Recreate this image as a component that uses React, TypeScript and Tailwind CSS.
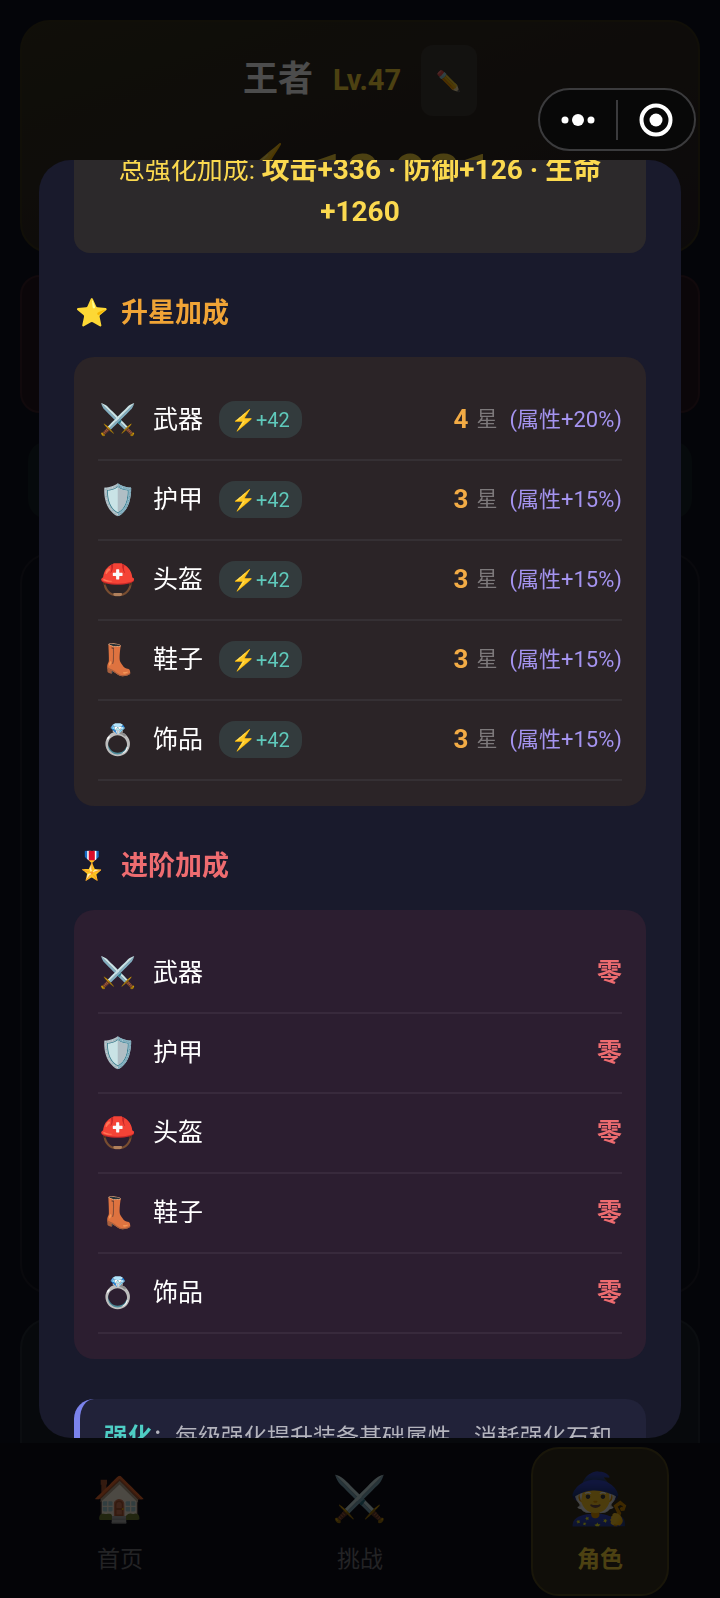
import { useState } from "react";

const gear = [
  { icon: "⚔️", name: "武器", power: 42, stars: 4 },
  { icon: "🛡️", name: "护甲", power: 42, stars: 3 },
  { icon: "⛑️", name: "头盔", power: 42, stars: 3 },
  { icon: "👢", name: "鞋子", power: 42, stars: 3 },
  { icon: "💍", name: "饰品", power: 42, stars: 3 },
];

const tabs = [
  { id: "home", icon: "🏠", label: "首页" },
  { id: "battle", icon: "⚔️", label: "挑战" },
  { id: "role", icon: "🧙", label: "角色" },
];

function SectionTitle({ icon, text, color }: { icon: string; text: string; color: string }) {
  return (
    <h2 className={`flex items-center gap-[11px] h-10 text-[27px] font-bold ${color}`}>
      <span className="w-9 text-center font-normal">{icon}</span>
      {text}
    </h2>
  );
}

function GearName({ icon, name }: { icon: string; name: string }) {
  return (
    <>
      <span className="w-10 text-center text-[30px] leading-none">{icon}</span>
      <span className="ml-[15px] text-[25px] text-white">{name}</span>
    </>
  );
}

function StarBonus() {
  return (
    <section className="mt-10">
      <SectionTitle icon="⭐" text="升星加成" color="text-[#f0a436]" />
      <ul className="mt-6 px-6 pt-6 pb-[25px] rounded-[20px] bg-[#2b2427]">
        {gear.map((g) => (
          <li key={g.name} className="flex items-center h-20 border-b-2 border-[#353034]">
            <GearName icon={g.icon} name={g.name} />
            <span className="ml-4 px-3 h-[37px] flex items-center rounded-2xl bg-[#333b3d] text-[20px] text-[#5fc9bb]">
              ⚡+{g.power}
            </span>
            <span className="ml-auto text-[26px] font-bold text-[#f2ab45]">{g.stars}</span>
            <span className="ml-2 text-[21px] text-[#7d797b]">星</span>
            <span className="ml-3 text-[22px] text-[#a594f0]">(属性+{g.stars * 5}%)</span>
          </li>
        ))}
      </ul>
    </section>
  );
}

function RankBonus() {
  return (
    <section className="mt-10">
      <SectionTitle icon="🎖️" text="进阶加成" color="text-[#ee6c70]" />
      <ul className="mt-6 px-6 pt-6 pb-[25px] rounded-[20px] bg-[#2c1e30]">
        {gear.map((g) => (
          <li key={g.name} className="flex items-center h-20 border-b-2 border-[#382a3c]">
            <GearName icon={g.icon} name={g.name} />
            <span className="ml-auto text-[25px] font-bold text-[#ee6c70]">零</span>
          </li>
        ))}
      </ul>
    </section>
  );
}

function BonusDialog() {
  return (
    <div
      role="dialog"
      aria-label="装备加成"
      className="w-full mx-[39px] h-[80vh] overflow-hidden rounded-[32px] bg-[#191a2c] px-[35px]"
    >
      <div className="-mt-[31px]">
        <p className="py-5 px-6 rounded-2xl bg-[#2c292b] text-center text-[26px] leading-[41px] text-[#fbd94f]">
          总强化加成: <strong className="text-[28px]">攻击+336 · 防御+126 · 生命+1260</strong>
        </p>
        <StarBonus />
        <RankBonus />
        <div className="mt-10 px-6 py-[18px] rounded-[20px] border-l-[6px] border-[#7b83ec] bg-[#212239] text-[23px] leading-[41px] text-[#b4b4bd]">
          <p>
            <strong className="text-[24px] text-[#4ecdc4]">强化</strong>：每级强化提升装备基础属性，消耗强化石和金币
          </p>
        </div>
      </div>
    </div>
  );
}

function Capsule() {
  return (
    <div className="fixed z-30 top-[88px] right-6 flex items-center w-[158px] h-[63px] rounded-full border-2 border-[#3b3b3d] bg-[#080808]">
      <button aria-label="更多" className="flex-1 flex justify-center">
        <svg width="36" height="14" viewBox="0 0 36 14" fill="#fff">
          <circle cx="5" cy="7" r="3.5" />
          <circle cx="18" cy="7" r="6" />
          <circle cx="31" cy="7" r="3.5" />
        </svg>
      </button>
      <span className="w-0.5 h-10 bg-[#3b3b3d]" />
      <button aria-label="关闭" className="flex-1 flex justify-center">
        <svg width="34" height="34" viewBox="0 0 34 34">
          <circle cx="17" cy="17" r="14.5" fill="none" stroke="#fff" strokeWidth="4" />
          <circle cx="17" cy="17" r="6.5" fill="#fff" />
        </svg>
      </button>
    </div>
  );
}

export default function App() {
  const [tab, setTab] = useState("role");

  return (
    <div className="h-screen overflow-hidden bg-[#10121f] font-[Roboto,'Noto_Sans_CJK_SC','Noto_Color_Emoji',sans-serif]">
      <main className="flex flex-col p-5">
        <header className="h-[233px] pt-[23px] rounded-[30px] border-2 border-[#3a341b] bg-linear-to-br from-[#37321f] to-[#2b2226]">
          <div className="flex items-center justify-center gap-5">
            <h1 className="text-[35px] font-bold text-white">王者</h1>
            <span className="text-[29px] font-bold text-[#ffd93d]">Lv.47</span>
            <button aria-label="改名" className="w-14 h-[71px] rounded-xl bg-[#423c36] text-[20px]">
              ✏️
            </button>
          </div>
          <p className="mt-[25px] text-center text-[58px] leading-[68px] font-bold text-[#ffd93d]">⚡ 12,981</p>
        </header>
        <div className="mt-[22px] h-[138px] rounded-[20px] border-2 border-[#3a1f28] bg-[#26171f]" />
        <div className="mt-7 mx-2 h-[78px] rounded-[20px] bg-[#162228]" />
        <div className="mt-[34px] h-[741px] rounded-[30px] border-2 border-[#20202c]" />
        <div className="mt-6 h-80 rounded-[30px] border-2 border-[#262e38] bg-[#1a2129]" />
      </main>

      <nav className="fixed bottom-0 inset-x-0 grid grid-cols-3 justify-items-center bg-[#0e0e1a] pt-1 pb-0.5">
        {tabs.map((t) => (
          <button
            key={t.id}
            onClick={() => setTab(t.id)}
            className={`flex flex-col items-center w-[138px] h-[149px] pt-[18px] gap-3 rounded-[28px] border-2 text-[23px] ${
              tab === t.id
                ? "border-[#554a20] bg-[#37301f] text-[#ffd93d] font-bold"
                : "border-transparent text-[#77777c]"
            }`}
          >
            <span className={tab === t.id ? "text-[50px] leading-[64px]" : "text-[44px] leading-[64px]"}>{t.icon}</span>
            {t.label}
          </button>
        ))}
      </nav>

      <div className="fixed inset-0 z-20 flex items-center bg-black/70">
        <BonusDialog />
      </div>
      <Capsule />
    </div>
  );
}
